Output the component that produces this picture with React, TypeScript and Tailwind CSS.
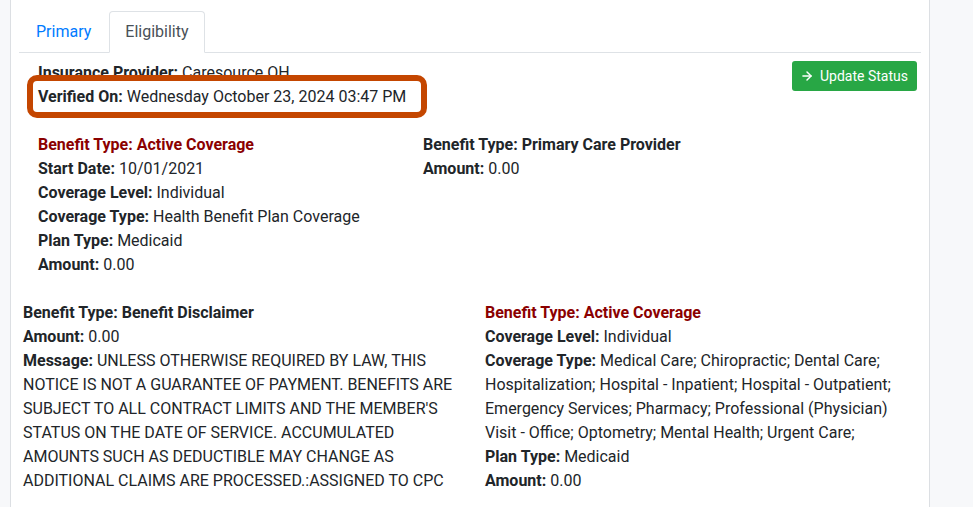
import { ArrowRight } from "lucide-react";
import React from "react";

const Field: React.FC<{ label: string; value: string }> = ({ label, value }) => (
  <div>
    <span className="font-bold">{label}:</span> {value}
  </div>
);

const BenefitTitle: React.FC<{ text: string; red?: boolean }> = ({ text, red }) => (
  <div className={red ? "font-bold text-[#8b0000]" : "font-bold"}>Benefit Type: {text}</div>
);

export default function App() {
  return (
    <div
      className="flex h-[507px] w-full overflow-hidden bg-[#f7f8fa] text-[16px] leading-6 text-[#212529]"
      style={{ fontFamily: "Roboto, 'Liberation Sans', sans-serif" }}
    >
      <div className="ml-[10px] w-[920px] border-x border-[#dcdfe3] bg-white px-[8px] pt-[11px]">
        {/* tabs */}
        <div className="flex gap-[2px] border-b border-[#dee2e6] pl-[1px]">
          <div className="-mb-px px-4 pb-[7px] pt-[9px] text-[#007bff]">Primary</div>
          <div className="-mb-px rounded-t-[4px] border border-[#dee2e6] border-b-white bg-white px-[15px] py-2 text-[#495057]">
            Eligibility
          </div>
        </div>

        <div className="pt-2">
          <div className="flex justify-between pl-[19px] pr-[4px]">
            <div>
              <Field label="Insurance Provider" value="Caresource OH" />
              <div className="relative z-10 -ml-[11px] -mt-[10px] w-[400px] rounded-[10px] border-[6px] border-[#c44600] bg-white pb-[3px] pl-[5px] pt-[4px]">
                <Field label="Verified On" value="Wednesday October 23, 2024 03:47 PM" />
              </div>
            </div>
            <div>
              <button className="flex h-[30px] items-center gap-[6px] rounded-[3px] bg-[#28a745] pl-[8px] pr-[9px] text-[14px] text-white">
                <ArrowRight className="h-[14px] w-[14px]" strokeWidth={2.5} />
                Update Status
              </button>
            </div>
          </div>

          <div className="mt-[15px] grid grid-cols-[385px_1fr] pl-[19px]">
            <div>
              <BenefitTitle text="Active Coverage" red />
              <Field label="Start Date" value="10/01/2021" />
              <Field label="Coverage Level" value="Individual" />
              <Field label="Coverage Type" value="Health Benefit Plan Coverage" />
              <Field label="Plan Type" value="Medicaid" />
              <Field label="Amount" value="0.00" />
            </div>
            <div>
              <BenefitTitle text="Primary Care Provider" />
              <Field label="Amount" value="0.00" />
            </div>
          </div>

          <div className="mt-[24px] grid grid-cols-[462px_430px] pl-[4px]">
            <div className="pr-[15px]">
              <BenefitTitle text="Benefit Disclaimer" />
              <Field label="Amount" value="0.00" />
              <Field
                label="Message"
                value="UNLESS OTHERWISE REQUIRED BY LAW, THIS NOTICE IS NOT A GUARANTEE OF PAYMENT. BENEFITS ARE SUBJECT TO ALL CONTRACT LIMITS AND THE MEMBER'S STATUS ON THE DATE OF SERVICE. ACCUMULATED AMOUNTS SUCH AS DEDUCTIBLE MAY CHANGE AS ADDITIONAL CLAIMS ARE PROCESSED.:ASSIGNED TO CPC"
              />
            </div>
            <div>
              <BenefitTitle text="Active Coverage" red />
              <Field label="Coverage Level" value="Individual" />
              <Field
                label="Coverage Type"
                value="Medical Care; Chiropractic; Dental Care; Hospitalization; Hospital - Inpatient; Hospital - Outpatient; Emergency Services; Pharmacy; Professional (Physician) Visit - Office; Optometry; Mental Health; Urgent Care;"
              />
              <Field label="Plan Type" value="Medicaid" />
              <Field label="Amount" value="0.00" />
            </div>
          </div>
        </div>
      </div>
    </div>
  );
}
